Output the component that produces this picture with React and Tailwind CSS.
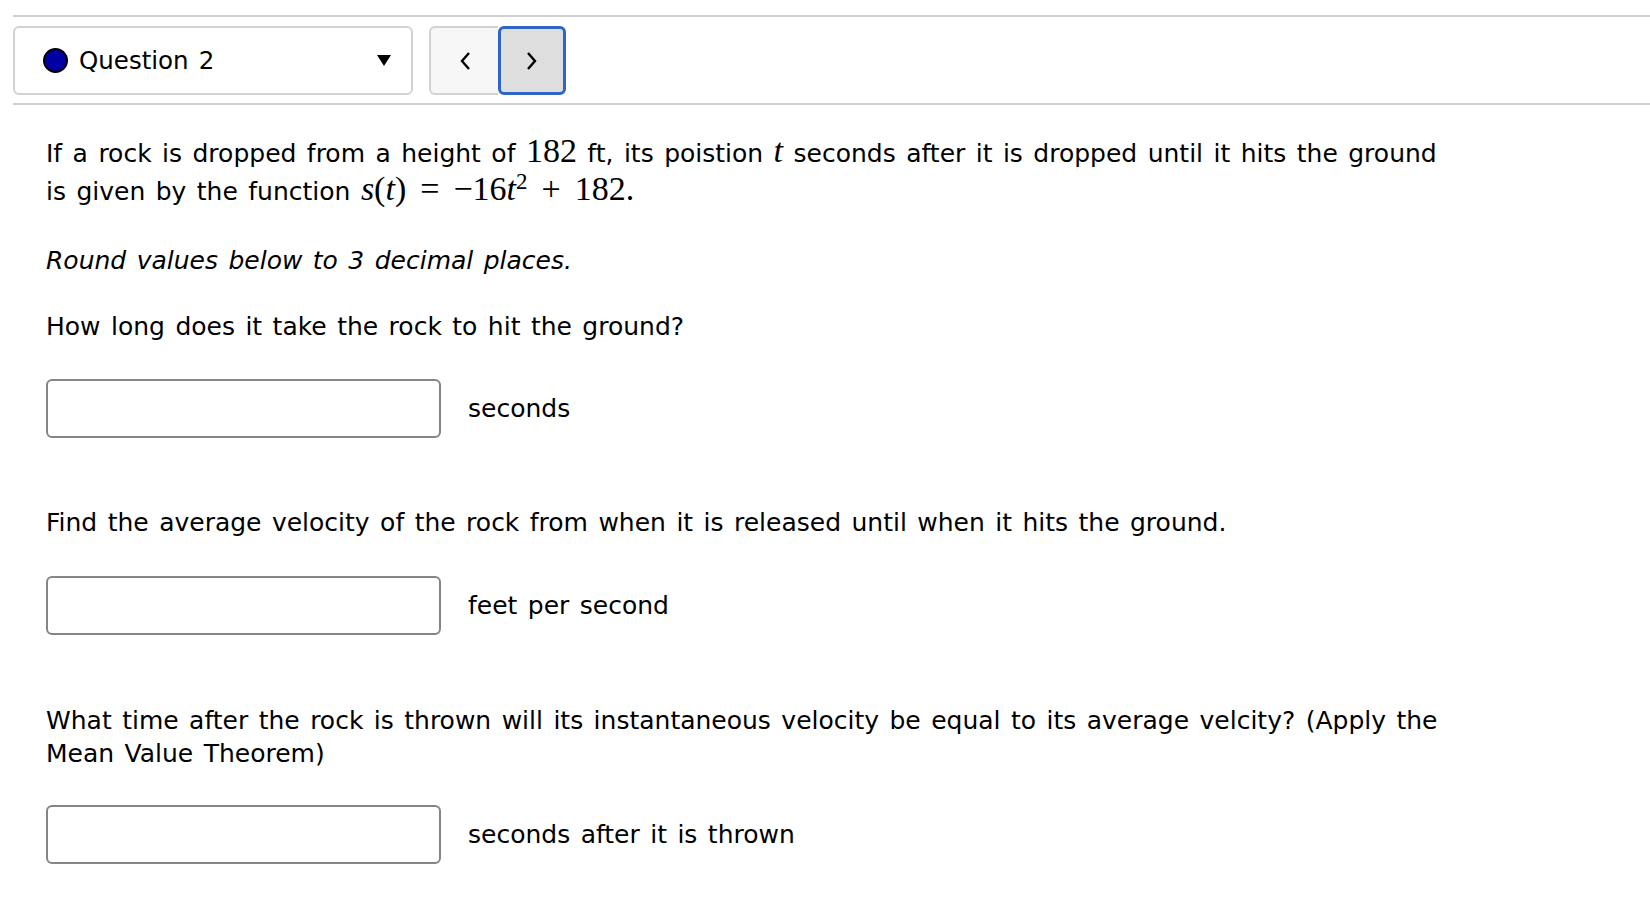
import React from "react";

function M({ children }) {
  return <span className="font-['Liberation_Serif','DejaVu_Serif',serif] text-[34px] leading-none [word-spacing:0]">{children}</span>;
}

function V({ children }) {
  return <span className="italic">{children}</span>;
}

function AnswerRow({ label }) {
  return (
    <div className="flex items-center gap-[27px]">
      <input
        type="text"
        className="w-[395px] h-[59px] border-2 border-[#858585] rounded-[6px] bg-white outline-none px-3"
      />
      <span>{label}</span>
    </div>
  );
}

export default function App() {
  return (
    <div className="min-h-screen bg-white text-black font-['DejaVu_Sans','Verdana',sans-serif] text-[25px] leading-[33px] [word-spacing:2.5px] pt-[15px] pl-[13px]">
      <div className="border-t-2 border-[#d0d0d0]" />

      {/* question nav */}
      <div className="flex items-center mt-[9px] h-[69px]">
        <div className="w-[400px] h-[69px] border-2 border-[#d2d2d2] rounded-[6px] flex items-center pl-[28px] pr-[20px]">
          <span className="w-[25px] h-[25px] rounded-full bg-[#0000a3] border-2 border-black" />
          <span className="ml-[11px] text-[24.5px]">Question 2</span>
          <span className="ml-auto">
            <svg width="14" height="11" viewBox="0 0 14 11">
              <path d="M0 0 L14 0 L7 11 Z" fill="#000" />
            </svg>
          </span>
        </div>
        <div className="ml-[16px] flex h-[69px]">
          <button className="w-[69px] h-[69px] bg-[#f7f7f7] border-2 border-r-0 border-[#d2d2d2] rounded-l-[6px] flex items-center justify-center">
            <svg width="12" height="20" viewBox="0 0 12 20" fill="none" stroke="#000" strokeWidth="2.4">
              <path d="M10 2 L3 10 L10 18" />
            </svg>
          </button>
          <button className="w-[68px] h-[69px] bg-[#dedede] border-[3px] border-[#2f64c8] rounded-[6px] flex items-center justify-center">
            <svg width="12" height="20" viewBox="0 0 12 20" fill="none" stroke="#000" strokeWidth="2.4">
              <path d="M2 2 L9 10 L2 18" />
            </svg>
          </button>
        </div>
      </div>

      <div className="border-t-2 border-[#d0d0d0] mt-[8px]" />

      <div className="pl-[33px] w-[1432px] pt-[29px]">
        <p className="leading-[37px]">
          If a rock is dropped from a height of <M>182</M> ft, its poistion <M><V>t</V></M> seconds after it is dropped until it hits the ground is given by the function{" "}
          <M>
            <V>s</V>(<V>t</V>)<span className="mx-[14px]">=</span>−16<V>t</V><sup className="text-[23px]">2</sup><span className="mx-[14px]">+</span>182.
          </M>
        </p>

        <p className="italic mt-[34px]">Round values below to 3 decimal places.</p>

        <p className="mt-[33px]">How long does it take the rock to hit the ground?</p>
        <div className="mt-[36px]">
          <AnswerRow label="seconds" />
        </div>

        <p className="mt-[68px]">Find the average velocity of the rock from when it is released until when it hits the ground.</p>
        <div className="mt-[37px]">
          <AnswerRow label="feet per second" />
        </div>

        <p className="mt-[69px]">
          What time after the rock is thrown will its instantaneous velocity be equal to its average velcity? (Apply the Mean Value Theorem)
        </p>
        <div className="mt-[35px]">
          <AnswerRow label="seconds after it is thrown" />
        </div>
      </div>
    </div>
  );
}
